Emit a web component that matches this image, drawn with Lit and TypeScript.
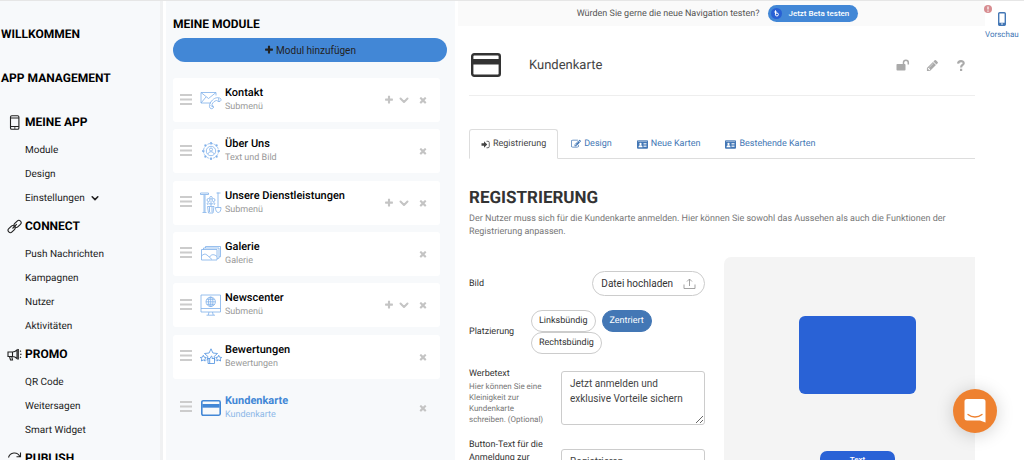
import { LitElement, html, css, svg, nothing } from "lit";
import { customElement, property, state } from "lit/decorators.js";

const FA = {
  plus: "M1600 736v192q0 40-28 68t-68 28h-416v416q0 40-28 68t-68 28h-192q-40 0-68-28t-28-68v-416h-416q-40 0-68-28t-28-68v-192q0-40 28-68t68-28h416v-416q0-40 28-68t68-28h192q40 0 68 28t28 68v416h416q40 0 68 28t28 68z",
  times: "M1490 1322q0 40-28 68l-136 136q-28 28-68 28t-68-28l-294-294-294 294q-28 28-68 28t-68-28l-136-136q-28-28-28-68t28-68l294-294-294-294q-28-28-28-68t28-68l136-136q28-28 68-28t68 28l294 294 294-294q28-28 68-28t68 28l136 136q28 28 28 68t-28 68l-294 294 294 294q28 28 28 68z",
  pencil: "M491 1536l91-91-235-235-91 91v107h128v128h107zm523-928q0-22-22-22-10 0-17 7l-542 542q-7 7-7 17 0 22 22 22 10 0 17-7l542-542q7-7 7-17zm-54-192l416 416-832 832h-416v-416zm683 96q0 53-37 90l-166 166-416-416 166-165q36-38 90-38 53 0 91 38l235 234q37 39 37 91z",
  edit: "M888 1184l116-116-152-152-116 116v56h96v96h56zm440-720q-16-16-33 1l-350 350q-17 17-1 33t33-1l350-350q17-17 1-33zm80 594v190q0 119-84.5 203.5t-203.5 84.5h-832q-119 0-203.5-84.5t-84.5-203.5v-832q0-119 84.5-203.5t203.5-84.5h832q63 0 117 25 15 7 18 23 3 17-9 29l-49 49q-14 14-32 8-23-6-45-6h-832q-66 0-113 47t-47 113v832q0 66 47 113t113 47h832q66 0 113-47t47-113v-126q0-13 9-22l64-64q15-15 35-7t20 29zm-96-738l288 288-672 672h-288v-288zm444 132l-92 92-288-288 92-92q28-28 68-28t68 28l152 152q28 28 28 68t-28 68z",
};
const fa = (name: keyof typeof FA, size: number) =>
  html`<svg width=${size} height=${size} viewBox="0 0 1792 1792" fill="currentColor" aria-hidden="true"><path d=${FA[name]} /></svg>`;

const chevron = (size: number) =>
  html`<svg width=${size} height=${size} viewBox="0 0 10 10" fill="none" stroke="currentColor" stroke-width="2" stroke-linecap="round" stroke-linejoin="round" aria-hidden="true"><path d="M1.5 3.5 5 7l3.5-3.5" /></svg>`;

const card = (w: number, h: number) =>
  html`<svg width=${w} height=${h} viewBox="0 0 30 24" aria-hidden="true"><rect x="1.2" y="1.2" width="27.6" height="21.6" rx="2" fill="none" stroke="currentColor" stroke-width="2.4"/><rect x="2" y="6" width="26" height="5.5" fill="currentColor"/></svg>`;

const idCard = html`<svg width="11" height="9" viewBox="0 0 22 17" aria-hidden="true"><rect width="22" height="17" rx="2" fill="currentColor"/><path d="M2 2h18" stroke="#fff" stroke-width="1"/><circle cx="7" cy="7.5" r="2.3" fill="#fff"/><path d="M3 14c0-3 1.5-4 4-4s4 1 4 4z" fill="#fff"/><path d="M13 6.5h6M13 9.5h6M13 12.5h6" stroke="#fff" stroke-width="1.5"/></svg>`;

const NAV_ICONS: Record<string, unknown> = {
  phone: svg`<rect x="3.5" y=".8" width="8.4" height="13.4" rx="1.3"/><path d="M3.5 3h8.4M3.5 11.5h8.4M7 13h1.5"/>`,
  link: svg`<rect x="6.6" y="2.6" width="8" height="4.6" rx="2.3" transform="rotate(-45 10.6 4.9)"/><rect x=".6" y="7.8" width="8" height="4.6" rx="2.3" transform="rotate(-45 4.6 10.1)"/><path d="m5.5 9.5 4.3-4.3"/>`,
  horn: svg`<path d="M1 5h4.500c2 0 3.5-1 4.500-2v8.500c-1-1-2.500-2-4.500-2H1zM5.500 5v4.500M2.500 9.500l1 3.500h2l-.7-3.500M11.300 2v10.500M13 4.500l1-.7M13 7.300h1.600M13 10l1 .7"/>`,
  sync: svg`<path d="M1.500 6.500A6 6 0 0 1 12.800 5.500M13.500 1.500v4.300H9.500M13.500 9A6 6 0 0 1 2 10"/>`,
};

interface NavGroup { title: string; icon: string; items: string[] }
const NAV: NavGroup[] = [
  { title: "MEINE APP", icon: "phone", items: ["Module", "Design", "Einstellungen"] },
  { title: "CONNECT", icon: "link", items: ["Push Nachrichten", "Kampagnen", "Nutzer", "Aktivitäten"] },
  { title: "PROMO", icon: "horn", items: ["QR Code", "Weitersagen", "Smart Widget"] },
  { title: "PUBLISH", icon: "sync", items: [] },
];

@customElement("side-nav")
class SideNav extends LitElement {
  static styles = css`
    :host { display: block; overflow: hidden; background: #f7f9fb; border-right: 3px solid #f0f1f2; position: relative; }
    .thumb { position: absolute; top: 0; right: -3px; width: 3px; height: 76%; background: #cbcccd; }
    .wrap { padding-top: 11px; }
    h2 { margin: 0; height: 44px; line-height: 44px; padding-left: 1px; font-size: 12px; font-weight: 700; color: #000; }
    h3 { margin: 0; height: 26px; display: flex; align-items: center; gap: 3px; padding-left: 7px; font-size: 12px; font-weight: 700; color: #000; }
    .lead { margin-top: 9px; }
    ul { list-style: none; margin: 0; padding: 3px 0 3px 25px; }
    li { height: 24px; display: flex; align-items: center; }
    a { display: flex; align-items: center; gap: 6px; color: #222; text-decoration: none; font-size: 10px; }
  `;
  render() {
    return html`
      <nav class="wrap" aria-label="Hauptmenü">
        <h2>WILLKOMMEN</h2>
        <h2>APP MANAGEMENT</h2>
        <div class="lead">
          ${NAV.map((g) => html`
            <h3><svg width="15" height="15" viewBox="0 0 15 15" fill="none" stroke="#222" stroke-width="1.1" aria-hidden="true">${NAV_ICONS[g.icon]}</svg>${g.title}</h3>
            <ul>${g.items.map((i) => html`<li><a href="#">${i}${i === "Einstellungen" ? chevron(8) : nothing}</a></li>`)}</ul>
          `)}
        </div>
      </nav>
      <div class="thumb"></div>
    `;
  }
}

const MODULE_ICONS: Record<string, unknown> = {
  mail: svg`<path d="M11 14H1V3.500h15v3M1 3.500l7.500 6L16 3.500M1 14l5-6"/><path d="M10 19c1.500 1.500 3.500.5 3.500-1l-1.500-2.500c1-2.500 2.500-3.500 4.500-4l2.500 1.200c2-.2 2.500-2.200 1.500-3.200-2-1.500-5.500-1-8 1.500s-4 6-2.500 8zM13.500 18l-3-1.500M19 12.700l-.5-3.500"/>`,
  about: svg`<circle cx="11" cy="11" r="7.5" stroke-dasharray="2.5 1"/><circle cx="11" cy="11" r="4.7"/><circle cx="11" cy="9.5" r="1.5"/><path d="M8 14c.3-3 5.700-3 6 0"/><path d="M11 2v2.500M11 17.500V20M2 11h2.500M17.500 11H20M4.600 4.600l1.600 1.600M15.800 15.800l1.600 1.600M4.600 17.400l1.600-1.600M15.800 6.200l1.600-1.600" stroke-width="1.6"/>`,
  tools: svg`<path d="M.5 1h8v1.500h-8zM4 3v17M5 3v17M2.500 20.500h4M18 .5v15M16.500 1h4M15.500 15.500h5.500c0 3-1 5-2.700 5s-2.800-2-2.800-5z"/><path d="M7.500 14.500h6.500l-1 6.500H8.500zM9.500 15v5M12 15v5M11 14V9M11 12c-2 0-3-1-3-2M11 12c2 0 3-1 3-2M8 13l-1-2M14 13l1-2"/><circle cx="8.5" cy="8" r="1.5"/><circle cx="13.5" cy="8" r="1.5"/><circle cx="11" cy="5.8" r="1.3"/>`,
  gallery: svg`<rect x="1.5" y="6.5" width="15.500" height="10.500"/><path d="M3.500 6.500V5h15.500V15.300H17M5.500 5V3.500h15V13.800H19M1.500 13c2-2 3.500-2.500 5.500-1l5 4.500M9.500 14c2-3 4.500-3 7.500-.5"/>`,
  news: svg`<rect x="1" y="1" width="19.5" height="17"/><path d="M1 14.500h19.500M9 18l-.7 3M12.500 18l.7 3M6.500 21.200h8.500"/><circle cx="10.7" cy="7.8" r="4.7"/><ellipse cx="10.700" cy="7.8" rx="2.2" ry="4.7"/><path d="M10.700 3v9.500M6 7.800h9.500M6.800 5.300h7.800M6.800 10.300h7.800"/>`,
  stars: svg`<g stroke="#4b8fdf"><path d="M7 14.500l.9-4L4.500 7.500l4.600-.5L11 2.800 12.900 7l4.600.5-3.400 3 .9 4"/><path d="m3.300 9.300.9 1.900 2.100.3-1.500 1.400.4 2.100-1.900-1-1.900 1 .4-2.100-1.500-1.400 2.100-.3zM18.700 9.300l.9 1.900 2.100.3-1.500 1.400.4 2.100-1.900-1-1.900 1 .4-2.100-1.500-1.400 2.100-.3zM8 12.500h2l1.500-2.500c1 .5.7 1.500.5 2.500h2.500v5H8zM9.700 12.500v5"/></g>`,
};

@customElement("module-card")
class ModuleCard extends LitElement {
  @property() name = "";
  @property() kind = "";
  @property() icon = "";
  @property({ type: Boolean }) sub = false;
  @property({ type: Boolean, reflect: true }) active = false;

  static styles = css`
    :host { display: flex; align-items: center; box-sizing: border-box; height: 44px; padding: 0 11px 0 7px; background: #fff; border-radius: 3px; }
    :host([active]) { background: transparent; }
    .grip { width: 12px; margin: 0 8px 2px 0; flex: none; }
    .icon { width: 22px; display: grid; place-items: center; color: #4287d6; margin-right: 3px; }
    .text { flex: 1; min-width: 0; }
    a { display: block; color: #000; text-decoration: none; font-size: 11px; line-height: 15px; font-weight: 500; }
    small { display: block; color: #999; font-size: 9px; line-height: 15px; }
    :host([active]) a { color: #4287d6; font-weight: 700; }
    :host([active]) small { color: #8db8e8; }
    .actions { display: flex; color: #c4c4c4; }
    button { all: unset; cursor: pointer; display: grid; place-items: center; width: 12px; height: 12px; }
    .add { margin-right: 3px; }
    .open { margin-right: 7px; }
  `;
  render() {
    return html`
      <svg class="grip" width="12" height="11" viewBox="0 0 12 11" fill="#ccc" aria-hidden="true"><path d="M0 0h12v2H0zM0 4.500h12v2H0zM0 9h12v2H0z"/></svg>
      <span class="icon">${this.icon === "card"
        ? card(20, 16)
        : html`<svg width="22" height="22" viewBox="0 0 22 22" fill="none" stroke="#7fb0ea" stroke-width=".8" stroke-linejoin="round" aria-hidden="true">${MODULE_ICONS[this.icon]}</svg>`}</span>
      <div class="text"><a href="#">${this.name}</a><small>${this.kind}</small></div>
      <div class="actions">
        ${this.sub ? html`<button class="add" aria-label="Hinzufügen">${fa("plus", 10)}</button><button class="open" aria-label="Öffnen">${chevron(10)}</button>` : nothing}
        <button aria-label="Löschen">${fa("times", 10)}</button>
      </div>
    `;
  }
}

const MODULES = [
  { name: "Kontakt", kind: "Submenü", icon: "mail", sub: true },
  { name: "Über Uns", kind: "Text und Bild", icon: "about" },
  { name: "Unsere Dienstleistungen", kind: "Submenü", icon: "tools", sub: true },
  { name: "Galerie", kind: "Galerie", icon: "gallery" },
  { name: "Newscenter", kind: "Submenü", icon: "news", sub: true },
  { name: "Bewertungen", kind: "Bewertungen", icon: "stars" },
  { name: "Kundenkarte", kind: "Kundenkarte", icon: "card", active: true },
];

@customElement("module-list")
class ModuleList extends LitElement {
  static styles = css`
    :host { display: flex; flex-direction: column; box-sizing: border-box; background: #f7f9fb; padding: 15px 8px 30px 7px; }
    h2 { margin: 0 0 6px; font-size: 12px; line-height: 16px; font-weight: 700; color: #000; }
    .new { display: flex; align-items: center; justify-content: center; gap: 2px; height: 24px; border: 0; border-radius: 12px; background: #4287d6; color: #222; font: 10px Roboto, sans-serif; padding: 0; cursor: pointer; }
    .list { flex: 1; display: flex; flex-direction: column; justify-content: space-between; padding: 16px 7px 0 0; }
  `;
  render() {
    return html`
      <h2>MEINE MODULE</h2>
      <button class="new">${fa("plus", 10)}Modul hinzufügen</button>
      <div class="list">
        ${MODULES.map((m) => html`<module-card .name=${m.name} .kind=${m.kind} .icon=${m.icon} .sub=${!!m.sub} .active=${!!m.active}></module-card>`)}
      </div>
    `;
  }
}

@customElement("card-editor")
class CardEditor extends LitElement {
  @state() private align = "Zentriert";

  static styles = css`
    :host { display: block; min-width: 0; overflow: hidden; color: #333; }
    .body { padding: 0 49px 0 11px; }
    .top { display: flex; }
    .beta { flex: 1; height: 25px; display: flex; align-items: center; justify-content: center; gap: 9px; padding-right: 8px; background: #fafafa; font-size: 9px; color: #555; box-sizing: border-box; }
    .beta button { display: flex; align-items: center; gap: 6px; height: 17px; padding: 0 9px 0 3px; border: 0; border-radius: 9px; background: #4287d6; color: #fff; font: 500 8px Roboto, sans-serif; cursor: pointer; }
    .preview-link { width: 39px; height: 25px; display: grid; justify-items: center; align-content: start; position: relative; padding: 10px 7px 0 0; box-sizing: border-box; gap: 2px; color: #4377b5; font-size: 8px; line-height: 12px; text-decoration: none; }
    .alert { position: absolute; top: 4px; left: -1px; }
    .head { display: flex; align-items: center; height: 60px; margin-top: 9px; border-bottom: 1px solid #eee; padding: 0 7px 0 2px; }
    .head h1 { margin: 0 auto 0 28px; font-size: 13px; font-weight: 400; color: #444; }
    .tools { display: flex; gap: 15px; color: #aaa; }
    .tools button { all: unset; cursor: pointer; display: grid; place-items: center; width: 14px; height: 14px; }
    .tabs { display: flex; margin-top: 33px; border-bottom: 1px solid #ddd; }
    .tabs a { display: flex; align-items: center; gap: 3px; height: 28px; margin-bottom: -1px; padding: 0 11px; border: 1px solid transparent; color: #4377b5; text-decoration: none; font-size: 9px; margin-right: 1px; }
    .tabs a.on { color: #444; background: #fff; border-color: #ddd #ddd #fff; border-radius: 3px 3px 0 0; }
    h2 { margin: 27px 0 0; font-size: 17px; line-height: 24px; font-weight: 700; color: #333; }
    .intro { margin: 3px 0 0; font-size: 9px; line-height: 13px; color: #777; }
    .cols { display: grid; grid-template-columns: minmax(0, 16fr) minmax(0, 17fr); gap: 19px; margin-top: 18px; }
    form { padding-top: 14px; font-size: 9px; }
    .file { display: flex; align-items: center; justify-content: space-between; }
    .upload { display: flex; align-items: center; gap: 10px; height: 25px; padding: 0 8px; border: 1px solid #ccc; border-radius: 13px; background: #fff; color: #333; font: 10px Roboto, sans-serif; cursor: pointer; }
    fieldset { display: grid; grid-template-columns: 62px 1fr; align-items: center; border: 0; margin: 14px 0 0; padding: 0; }
    .pills { display: flex; flex-wrap: wrap; column-gap: 6px; }
    .pill { box-sizing: border-box; height: 22px; display: flex; align-items: center; padding: 0 7px; border: 1px solid #ccc; border-radius: 11px; font-size: 9px; cursor: pointer; }
    .pill input { appearance: none; width: 0; height: 0; margin: 0; }
    .pill.on { background: #4377b5; border-color: #4377b5; color: #fff; }
    .field { display: grid; grid-template-columns: 80px minmax(0, 1fr); gap: 12px; margin-top: 17px; }
    .field label { line-height: 13px; display: block; margin-top: -3px; }
    .field small { display: block; font-size: 8px; line-height: 11px; color: #777; }
    .center { align-items: center; min-height: 38px; }
    textarea, .input { box-sizing: border-box; width: 100%; border: 1px solid #ccc; border-radius: 3px; padding: 4px 8px; font: 10px/15px Roboto, sans-serif; color: #444; background: #fff; outline: none; display: block; margin: 0; }
    textarea { height: 54px; resize: both; }
    .input { height: 24px; }
    .center label { align-self: start; }
    .phone { background: #f4f4f4; border-radius: 7px 0 0 0; display: flex; flex-direction: column; align-items: center; padding: 59px 0 40px 16px; min-height: 260px; box-sizing: border-box; }
    .picture { width: 50%; height: 78px; background: #2962d6; border-radius: 6px; }
    .cta { margin-top: 57px; width: 32%; height: 22px; border: 0; border-radius: 7px; background: #2962d6; color: #fff; font: 500 8px Roboto, sans-serif; padding: 0 0 6px; }
    .chat { position: fixed; right: 27px; bottom: 27px; width: 44px; height: 44px; border: 0; border-radius: 50%; background: #ee8130; display: grid; place-items: center; padding: 0; box-shadow: 0 2px 18px rgba(0, 0, 0, 0.18); cursor: pointer; }
  `;

  render() {
    return html`
      <div class="top">
        <div class="beta">
          <span>Würden Sie gerne die neue Navigation testen?</span>
          <button><svg width="11" height="11" viewBox="0 0 11 11" aria-hidden="true"><circle cx="5.5" cy="5.5" r="5.5" fill="#2860d4"/><path d="M4.500 2.300v4.200M3.300 4h2.600" stroke="#fff" fill="none"/><circle cx="5.9" cy="6.5" r="1.5" stroke="#fff" fill="none"/></svg>Jetzt Beta testen</button>
        </div>
        <a class="preview-link" href="#">
          <svg width="10" height="16" viewBox="0 0 10 16" aria-hidden="true"><rect x="1.7" y="1.7" width="6.6" height="12.6" rx="1" fill="none" stroke="currentColor" stroke-width="1.4"/><path d="M1.700 13h6.600" stroke="currentColor" stroke-width="2.5"/><circle cx="5" cy="13" r=".8" fill="#fff"/></svg>
          Vorschau
          <svg class="alert" width="8" height="8" viewBox="0 0 8 8" aria-hidden="true"><circle cx="4" cy="4" r="4" fill="#d78c90"/><path d="M4 1.500v3M4 5.500v1.200" stroke="#fff" stroke-width="1.2"/></svg>
        </a>
      </div>
      <div class="body">
        <header class="head">
          ${card(30, 24)}
          <h1>Kundenkarte</h1>
          <div class="tools">
            <button aria-label="Entsperren"><svg width="14" height="12" viewBox="0 0 14 12" aria-hidden="true"><rect x=".5" y="5" width="9" height="6.5" rx=".8" fill="currentColor"/><path d="M7.500 5.500V3.600a2.400 2.400 0 0 1 4.800 0V5.500" fill="none" stroke="currentColor" stroke-width="1.5"/></svg></button>
            <button aria-label="Bearbeiten">${fa("pencil", 13)}</button>
            <button aria-label="Hilfe"><svg width="8" height="11" viewBox="0 0 8 11" fill="none" stroke="currentColor" stroke-width="2.2" aria-hidden="true"><path d="M1.100 3.600C1.300.4 6.700.4 6.700 3.200 6.700 5 4.100 5 4.100 7.400M4.100 8.700v2.200"/></svg></button>
          </div>
        </header>
        <nav class="tabs" aria-label="Bereiche">
          <a class="on" href="#"><svg width="9" height="9" viewBox="0 0 18 18" aria-hidden="true"><path d="M1 6.500h5V2.500L12.500 9 6 15.500v-4H1z" fill="currentColor"/><path d="M11 2.500h3a2.500 2.500 0 0 1 2.500 2.500v8a2.500 2.500 0 0 1-2.500 2.500h-3" fill="none" stroke="currentColor" stroke-width="1.6"/></svg>Registrierung</a>
          <a href="#">${fa("edit", 10)}Design</a>
          <a href="#">${idCard}Neue Karten</a>
          <a href="#">${idCard}Bestehende Karten</a>
        </nav>
        <h2>REGISTRIERUNG</h2>
        <p class="intro">Der Nutzer muss sich für die Kundenkarte anmelden. Hier können Sie sowohl das Aussehen als auch die Funktionen der Registrierung anpassen.</p>
        <div class="cols">
          <form @submit=${(e: Event) => e.preventDefault()}>
            <div class="file">
              <label for="file">Bild</label>
              <button id="file" class="upload" type="button">Datei hochladen<svg width="13" height="11" viewBox="0 0 13 11" fill="none" stroke="#999" stroke-width=".9" aria-hidden="true"><path d="M1 6.500v4h11v-4M6.500 8V1M4 3.500 6.500 1 9 3.500"/></svg></button>
            </div>
            <fieldset aria-labelledby="place">
              <span id="place">Platzierung</span>
              <div class="pills">
                ${["Linksbündig", "Zentriert", "Rechtsbündig"].map((p) => html`
                  <label class="pill ${this.align === p ? "on" : ""}"><input type="radio" name="place" .checked=${this.align === p} @change=${() => (this.align = p)} />${p}</label>`)}
              </div>
            </fieldset>
            <div class="field">
              <div><label for="promo">Werbetext</label><small>Hier können Sie eine Kleinigkeit zur Kundenkarte schreiben. (Optional)</small></div>
              <textarea id="promo" .value=${"Jetzt anmelden und exklusive Vorteile sichern"}></textarea>
            </div>
            <div class="field center">
              <label for="btn">Button-Text für die Anmeldung zur</label>
              <input id="btn" class="input" .value=${"Registrieren"} />
            </div>
          </form>
          <div class="phone">
            <div class="picture"></div>
            <button class="cta">Text</button>
          </div>
        </div>
      </div>
      <button class="chat" aria-label="Chat"><svg width="22" height="24" viewBox="0 0 22 24" aria-hidden="true"><path d="M3 0h16a2.500 2.500 0 0 1 2.500 2.500V23.500L16 21.500H3A2.500 2.500 0 0 1 .5 19V2.500A2.500 2.500 0 0 1 3 0z" fill="#fff"/><path d="M4 15.500c4 3.300 10 3.300 14 0" fill="none" stroke="#ee8130" stroke-width="1.3" stroke-linecap="round"/></svg></button>
    `;
  }
}

@customElement("app-root")
class AppRoot extends LitElement {
  static styles = css`
    :host { display: grid; grid-template-columns: 163px 289px minmax(0, 1fr); column-gap: 3px; height: 100vh; overflow: hidden; box-sizing: border-box; border-top: 1px solid #e6e6e6; background: #fff; font-family: Roboto, "Liberation Sans", sans-serif; text-rendering: geometricPrecision; }
  `;
  render() {
    return html`<side-nav></side-nav><module-list></module-list><card-editor></card-editor>`;
  }
}
